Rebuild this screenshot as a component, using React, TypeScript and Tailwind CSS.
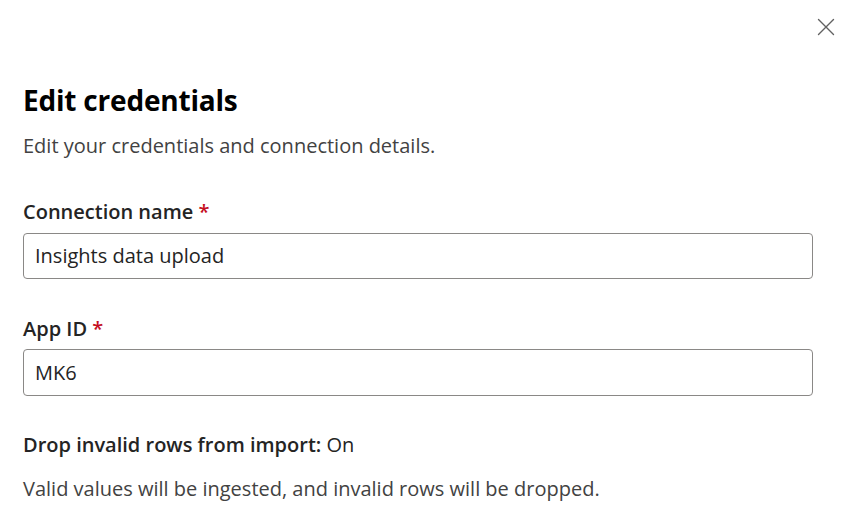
import React from "react";

export default function App() {
  const font = { fontFamily: '"Open Sans", "Noto Sans", sans-serif' };
  return (
    <div className="w-[851px] h-[530px] bg-white overflow-hidden text-[#242424]" style={font}>
      <div className="flex justify-end h-[54px] items-center pr-[15px]">
        <button className="w-[20px] h-[20px] flex items-center justify-center text-[#616161]" aria-label="Close">
          <svg width="18" height="18" viewBox="0 0 18 18" fill="none" stroke="currentColor" strokeWidth="1.4" strokeLinecap="round">
            <path d="M1.5 1.5 L16.5 16.5 M16.5 1.5 L1.5 16.5" />
          </svg>
        </button>
      </div>
      <div className="pl-[23px] pr-[38px]">
        <h1 className="mt-[28px] text-[28px] leading-[36px] font-bold text-black tracking-[-0.2px]">Edit credentials</h1>
        <p className="mt-[14px] text-[20px] leading-[28px] text-[#424242]">Edit your credentials and connection details.</p>

        <label className="block mt-[38px] text-[20px] leading-[28px] font-semibold text-[#242424]">
          Connection name <span className="text-[#c50f1f]">*</span>
        </label>
        <div className="mt-[7px] h-[46px] border border-[#8a8886] rounded-[4px] flex items-center px-[11px] text-[20px] text-[#242424]">
          Insights data upload
        </div>

        <label className="block mt-[36px] text-[20px] leading-[28px] font-semibold text-[#242424]">
          App ID <span className="text-[#c50f1f]">*</span>
        </label>
        <div className="mt-[6px] h-[47px] border border-[#8a8886] rounded-[4px] flex items-center px-[11px] text-[20px] text-[#242424]">
          MK6
        </div>

        <p className="mt-[35px] text-[20px] leading-[28px] text-[#242424]">
          <span className="font-semibold">Drop invalid rows from import:</span> On
        </p>
        <p className="mt-[16px] text-[20px] leading-[28px] text-[#424242]">
          Valid values will be ingested, and invalid rows will be dropped.
        </p>
      </div>
    </div>
  );
}
